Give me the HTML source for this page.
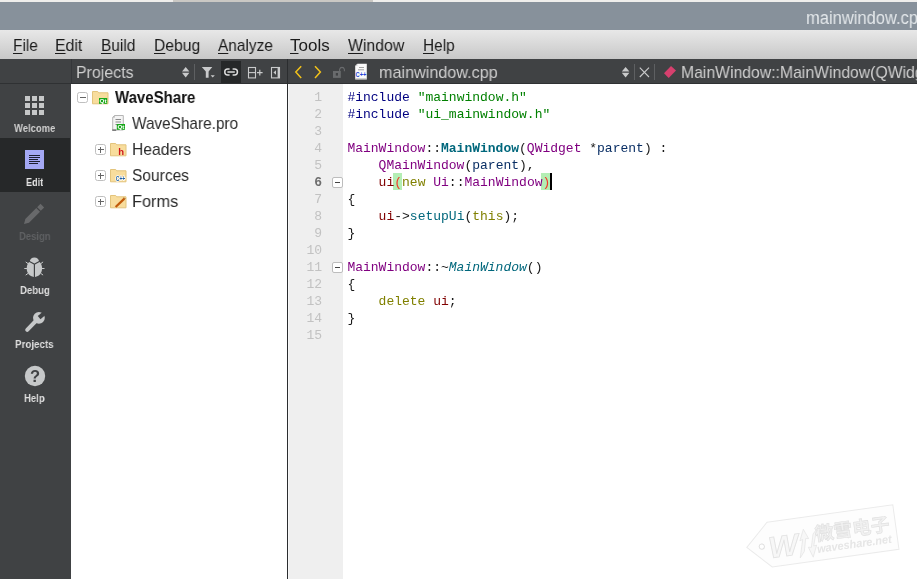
<!DOCTYPE html>
<html lang="en">
<head>
<meta charset="utf-8">
<title>mainwindow.cpp - Qt Creator</title>
<style>
*{box-sizing:border-box;margin:0;padding:0}
html,body{width:917px;height:579px;overflow:hidden;background:#fff}
body{position:relative;font-family:"Liberation Sans",sans-serif;color:#1a1a1a}
.abs{position:absolute}
.t{position:absolute;white-space:nowrap;transform-origin:0 0;line-height:1;will-change:transform}
/* top strip + title bar */
#strip{left:0;top:0;width:917px;height:2px;background:#efeeec}
#strip i{position:absolute;left:173px;top:0;width:200px;height:2px;background:#cac8c4}
#title{left:0;top:2px;width:917px;height:28px;background:#87919b}
#title .t{color:#e4e8eb;font-size:18px;transform:scaleX(.9)}
/* menu bar */
#menu{left:0;top:30px;width:917px;height:29px;background:linear-gradient(#e8e8e8,#c8c8c8)}
#menu .t{font-size:17px;top:7px;color:#1b1b1b;transform:scaleX(.9)}
#menu u{text-decoration:underline;text-underline-offset:2px;text-decoration-thickness:1px}
/* dark bars */
#bar{left:0;top:59px;width:917px;height:25px;background:#404244;border-bottom:1px solid #2f3133}
#side{left:0;top:84px;width:71px;height:495px;background:#404244}
#side .sel{position:absolute;left:0;top:54px;width:70px;height:54px;background:#262829}
.lbl{font-size:11.5px;font-weight:bold;color:#cfcfcf;transform:scaleX(.78)}
#vline{left:287px;top:59px;width:1px;height:520px;background:#2b2d2f}
#gutter{left:288px;top:84px;width:55px;height:495px;background:#efefef;border-left:1px solid #f8f8f8}
.tb{font-size:17px;color:#cfcfcf;transform:scaleX(.9)}
/* tree */
#tree .t{font-size:17px;color:#2a2a2a;transform:scaleX(.9)}
.exp{position:absolute;width:11px;height:11px;border:1px solid #bfbfbf;border-radius:2.5px;background:#fff}
.exp:before{content:"";position:absolute;left:1.5px;top:4px;width:6px;height:1px;background:#666}
.exp.plus:after{content:"";position:absolute;left:4px;top:1.5px;width:1px;height:6px;background:#666}
/* code */
#code{left:347.4px;top:89px;font-family:"Liberation Mono",monospace;font-size:13px;line-height:17px;white-space:pre;color:#1a1a1a}
#nums{left:289px;top:89px;width:33px;text-align:right;font-family:"Liberation Mono",monospace;font-size:13px;line-height:17px;color:#c2c2c2;white-space:pre}
#nums b{color:#6e6e6e}
.pp{color:#000080}.st{color:#008000}.ty{color:#800080}.fn{color:#00677c}.kw{color:#808000}.fd{color:#800000}.lo{color:#092e64}
.vf{color:#00677c;font-style:italic}
.pm{color:#f03c28}
.hl{position:absolute;top:173px;width:9px;height:17px;background:#b4eeb4}
.fold{position:absolute;left:332px;width:11px;height:11px;border:1px solid #bdbdbd;border-radius:2px;background:#fff}
.fold:before{content:"";position:absolute;left:2px;top:4px;width:5px;height:1px;background:#444}
</style>
</head>
<body>
<div id="strip" class="abs"><i></i></div>
<div id="title" class="abs"><span class="t" id="tt" style="left:806.2px;top:6.8px;transform:scaleX(.918)">mainwindow.cpp - Qt Creator</span></div>

<div id="menu" class="abs">
<span class="t" id="m1" style="left:13.1px;top:7.2px;transform:scaleX(0.904)"><u>F</u>ile</span>
<span class="t" id="m2" style="left:55.0px;top:7.2px;transform:scaleX(0.934)"><u>E</u>dit</span>
<span class="t" id="m3" style="left:101.2px;top:7.2px;transform:scaleX(0.911)"><u>B</u>uild</span>
<span class="t" id="m4" style="left:154.0px;top:7.2px;transform:scaleX(0.921)"><u>D</u>ebug</span>
<span class="t" id="m5" style="left:217.9px;top:7.2px;transform:scaleX(0.908)"><u>A</u>nalyze</span>
<span class="t" id="m6" style="left:290.4px;top:7.2px;transform:scaleX(0.998)"><u>T</u>ools</span>
<span class="t" id="m7" style="left:348.2px;top:7.2px;transform:scaleX(0.930)"><u>W</u>indow</span>
<span class="t" id="m8" style="left:423.2px;top:7.2px;transform:scaleX(0.905)"><u>H</u>elp</span>
</div>

<div id="bar" class="abs"></div>
<div class="abs" style="left:221px;top:61px;width:20px;height:22px;background:#262829"></div>
<svg class="abs" style="left:71px;top:59px" width="846" height="25" viewBox="71 59 846 25" font-family="Liberation Sans, sans-serif">
<rect x="71" y="59" width="1" height="24" fill="#35373a"/>
<!-- combo arrows -->
<path d="M182 71.6 L185.7 67 L189.4 71.6 Z M182 72.8 L185.7 77.4 L189.4 72.8 Z" fill="#c9cacb"/>
<rect x="194" y="64" width="1" height="16" fill="#5e6062"/>
<!-- filter -->
<path d="M201.8 66.9 H212.3 L208.6 71.6 V77.7 H205.8 V71.6 Z" fill="#c9cacb"/>
<path d="M210.6 75.2 H214.8 L212.7 77.6 Z" fill="#c9cacb"/>
<!-- link -->
<g fill="none" stroke="#dcdcdc" stroke-width="1.5">
<path d="M229.6 69.05 H227.7 A2.95 2.95 0 0 0 227.7 74.95 H229.6"/>
<path d="M232.6 69.05 H234.5 A2.95 2.95 0 0 1 234.5 74.95 H232.6"/>
<path d="M227.4 72 H234.8"/>
</g>
<!-- split -->
<g fill="none" stroke="#c9cacb" stroke-width="1.1">
<rect x="248.5" y="67.5" width="7" height="10.4"/><path d="M248.5 72.6 H255.5"/>
<path d="M257 72.6 H262.6 M259.8 69.8 V75.4" stroke-width="1.2"/>
</g>
<!-- collapse -->
<rect x="271.5" y="67.5" width="8" height="10.4" fill="none" stroke="#c9cacb" stroke-width="1.1"/>
<rect x="277.6" y="67.5" width="2.4" height="10.4" fill="#c9cacb"/>
<path d="M276 70.2 V74.8 L273.4 72.5 Z" fill="#c9cacb"/>
<!-- nav arrows -->
<g fill="none" stroke="#f2c21a" stroke-width="1.5" stroke-linejoin="miter">
<path d="M301.2 66.2 L295.8 72.1 L301.2 78"/>
<path d="M315 66.2 L320.4 72.1 L315 78"/>
</g>
<!-- lock -->
<rect x="333" y="71" width="7.8" height="6.9" fill="#696b6d"/>
<rect x="335.8" y="73" width="2.2" height="2.6" fill="#404244"/>
<path d="M339.6 71.5 V69.4 A2.5 2.8 0 0 1 344.4 69.4 V71.2" fill="none" stroke="#696b6d" stroke-width="1.1"/>
<!-- cpp file icon -->
<path d="M357.5 63.8 H366.8 V79 H355.2 V66 Z" fill="#fafafa"/>
<rect x="355.2" y="78.4" width="11.6" height="1.4" fill="#b4b4b4"/>
<path d="M355.2 66 L357.5 66 L357.5 63.8 Z" fill="#d5d5d5"/>
<path d="M359 67.5 H364 M358 69.8 H364" stroke="#9a9a9a" stroke-width=".9" fill="none"/>
<text x="355.6" y="77.4" font-size="8" font-weight="bold" fill="#2446d8" textLength="10.6" lengthAdjust="spacingAndGlyphs">C++</text>
<!-- right side -->
<path d="M621.8 71.6 L625.6 67 L629.4 71.6 Z M621.8 72.8 L625.6 77.4 L629.4 72.8 Z" fill="#c9cacb"/>
<rect x="634" y="64" width="1" height="16" fill="#5e6062"/>
<path d="M639.8 67.6 L649 77 M649 67.6 L639.8 77" stroke="#c9cacb" stroke-width="1.1" fill="none"/>
<rect x="654" y="64" width="1" height="16" fill="#5e6062"/>
<path d="M671 65.9 L676 70.4 L668.7 77.9 L664 73.2 Z" fill="#d6406e"/>
</svg>
<span class="t tb" id="b1" style="left:76.1px;top:63.7px;transform:scaleX(0.936)">Projects</span>
<span class="t tb" id="b2" style="left:378.6px;top:63.7px;transform:scaleX(0.952)">mainwindow.cpp</span>
<span class="t tb" id="b3" style="left:680.6px;top:63.7px;transform:scaleX(0.927)">MainWindow::MainWindow(QWidget *)</span>
<div id="side" class="abs"><div class="sel"></div></div>
<svg class="abs" style="left:0;top:59px" width="917" height="520" viewBox="0 59 917 520">
<!-- welcome grid -->
<g fill="#c6c7c8">
<rect x="25" y="96" width="5" height="5"/><rect x="32" y="96" width="5" height="5"/><rect x="39" y="96" width="5" height="5"/>
<rect x="25" y="103" width="5" height="5"/><rect x="32" y="103" width="5" height="5"/><rect x="39" y="103" width="5" height="5"/>
<rect x="25" y="110" width="5" height="5"/><rect x="32" y="110" width="5" height="5"/><rect x="39" y="110" width="5" height="5"/>
</g>
<!-- edit -->
<rect x="25" y="150" width="19" height="19" fill="#a4a8f4"/>
<g fill="#1d1e30"><rect x="29" y="155" width="11" height="1"/><rect x="29" y="157" width="11" height="1"/><rect x="29" y="159" width="9" height="1"/><rect x="29" y="161" width="11" height="1"/><rect x="29" y="163" width="9" height="1"/></g>
<!-- design pencil -->
<g transform="translate(24,224) rotate(-45)" fill="#68696b">
<path d="M0 0 L4.5 -2.6 L20 -2.6 L20 2.6 L4.5 2.6 Z"/><rect x="21.2" y="-2.6" width="4.7" height="5.2"/>
</g>
<!-- debug bug -->
<g fill="#c6c8c9" stroke="#c6c8c9">
<path d="M34.4 257.6 C37 257.6 38.6 259.4 39 261 L34.4 263.6 L29.8 261 C30.2 259.4 31.8 257.6 34.4 257.6Z" stroke="none"/>
<path d="M33.8 264.6 L29.2 262 C27.4 263.6 26.7 266 26.7 268.6 C26.7 273 29.6 276.6 33.8 277Z" stroke="none"/>
<path d="M35 264.6 L39.6 262 C41.4 263.6 42.1 266 42.1 268.6 C42.1 273 39.2 276.6 35 277Z" stroke="none"/>
<path d="M24.3 268.5H27 M41.8 268.5H44.5 M25.7 261.9L28 263.6 M43.1 261.9L40.8 263.6 M25.7 275.1L28 273.4 M43.1 275.1L40.8 273.4" fill="none" stroke-width="1"/>
</g>
<!-- projects wrench -->
<g>
<path d="M38.7 318 L27.2 329.8" stroke="#c6c8c9" stroke-width="4" stroke-linecap="round" fill="none"/>
<circle cx="38.9" cy="317.8" r="5.9" fill="#c6c8c9"/>
<rect x="0.3" y="-2.1" width="8" height="4.2" fill="#404244" transform="translate(38.9,317.8) rotate(-40)"/>
</g>
<!-- help -->
<circle cx="35" cy="376" r="10.2" fill="#c6c8c9"/>
<text x="35" y="382.4" text-anchor="middle" font-family="Liberation Sans, sans-serif" font-weight="bold" font-size="16.5" fill="#404244">?</text>
</svg>
<span class="t lbl" id="l1" style="left:13.7px;top:122.7px;transform:scaleX(0.82)">Welcome</span>
<span class="t lbl" id="l2" style="left:25.6px;top:176.7px;transform:scaleX(0.789);color:#e4e4e4">Edit</span>
<span class="t lbl" id="l3" style="left:19.1px;top:230.7px;transform:scaleX(0.823);color:#5f6163">Design</span>
<span class="t lbl" id="l4" style="left:19.5px;top:284.7px;transform:scaleX(0.834);color:#dedede">Debug</span>
<span class="t lbl" id="l5" style="left:15.2px;top:338.7px;transform:scaleX(0.851);color:#dedede">Projects</span>
<span class="t lbl" id="l6" style="left:23.8px;top:392.7px;transform:scaleX(0.828);color:#dedede">Help</span>
<div id="vline" class="abs"></div>
<div id="gutter" class="abs"></div>

<div id="tree" class="abs" style="left:0;top:0">
<svg class="abs" style="left:72px;top:85px" width="215" height="130" viewBox="72 85 215 130" font-family="Liberation Sans, sans-serif">
<path d="M92.5 91.5 h5.2 l1 1.3 h9.3 v11 h-15.5 Z" fill="#f8dd9d" stroke="#e3c47c" stroke-width="1"/>
<rect x="99" y="98" width="8.2" height="5.8" fill="#17a81a"/>
<text x="99.6" y="103.1" font-size="5.6" font-weight="bold" fill="#fff" textLength="7" lengthAdjust="spacingAndGlyphs">Qt</text>
<!-- pro file -->
<path d="M114.5 115.5 H123.3 V130 H112.7 V117.3 Z" fill="#f4f4f4" stroke="#b5b5b5" stroke-width="1"/>
<path d="M112.7 117.3 L114.5 117.3 L114.5 115.5" fill="none" stroke="#b5b5b5" stroke-width=".8"/>
<path d="M115.5 119.5H121 M115.5 122H121 M115.5 124.5H118" stroke="#8a8a8a" stroke-width="1" fill="none"/>
<rect x="112.2" y="129.5" width="4" height="1.3" fill="#666"/>
<rect x="116.8" y="124" width="8.2" height="5.8" fill="#17a81a"/>
<text x="117.4" y="129.1" font-size="5.6" font-weight="bold" fill="#fff" textLength="7" lengthAdjust="spacingAndGlyphs">Qt</text>
<path d="M110.5 143.5 h5.2 l1 1.3 h9.3 v11 h-15.5 Z" fill="#f8dd9d" stroke="#e3c47c" stroke-width="1"/>
<text x="118.3" y="155" font-size="9.5" font-weight="bold" fill="#d0161b">h</text>
<path d="M110.5 169.5 h5.2 l1 1.3 h9.3 v11 h-15.5 Z" fill="#f8dd9d" stroke="#e3c47c" stroke-width="1"/>
<text x="115.8" y="181.2" font-size="8" font-weight="bold" fill="#1f5fa0" stroke="#fff" stroke-width="1.6" paint-order="stroke" textLength="9.4" lengthAdjust="spacingAndGlyphs">C++</text>
<path d="M110.5 195.5 h5.2 l1 1.3 h9.3 v11 h-15.5 Z" fill="#f8dd9d" stroke="#e3c47c" stroke-width="1"/>
<path d="M115.6 207 L124.4 198.6" stroke="#c25a0a" stroke-width="2.2" fill="none"/>
<path d="M124.0 197.6 L125.3 198.9" stroke="#8a4a10" stroke-width="1" fill="none"/>
</svg>
<i class="exp" style="left:77px;top:92px"></i>
<span class="t" id="t1" style="left:114.5px;top:88.6px;transform:scaleX(0.883);font-weight:bold;color:#111">WaveShare</span>
<span class="t" id="t2" style="left:132.1px;top:114.6px;transform:scaleX(0.903)">WaveShare.pro</span>
<i class="exp plus" style="left:95px;top:144px"></i>
<span class="t" id="t3" style="left:132.0px;top:140.6px;transform:scaleX(0.920)">Headers</span>
<i class="exp plus" style="left:95px;top:170px"></i>
<span class="t" id="t4" style="left:132.0px;top:166.6px;transform:scaleX(0.914)">Sources</span>
<i class="exp plus" style="left:95px;top:196px"></i>
<span class="t" id="t5" style="left:132.0px;top:192.6px;transform:scaleX(0.960)">Forms</span>
</div>

<div id="nums" class="abs">1
2
3
4
5
<b>6</b>
7
8
9
10
11
12
13
14
15</div>
<i class="fold" style="top:177px"></i>
<i class="fold" style="top:262px"></i>
<i class="hl" style="left:393px"></i><i class="hl" style="left:541px"></i><i class="abs" style="left:550px;top:173px;width:2px;height:17px;background:#000"></i>
<div id="code" class="abs"><span class="pp">#include</span> <span class="st">"mainwindow.h"</span>
<span class="pp">#include</span> <span class="st">"ui_mainwindow.h"</span>

<span class="ty">MainWindow</span>::<b class="fn">MainWindow</b>(<span class="ty">QWidget</span> *<span class="lo">parent</span>) :
    <span class="ty">QMainWindow</span>(<span class="lo">parent</span>),
    <span class="fd">ui</span><span class="pm">(</span><span class="kw">new</span> <span class="ty">Ui</span>::<span class="ty">MainWindow</span><span class="pm">)</span>
{
    <span class="fd">ui</span>-&gt;<span class="fn">setupUi</span>(<span class="kw">this</span>);
}

<span class="ty">MainWindow</span>::~<span class="vf">MainWindow</span>()
{
    <span class="kw">delete</span> <span class="fd">ui</span>;
}
</div>
<svg class="abs" id="wm" style="left:737px;top:495px" width="180" height="84" viewBox="737 495 180 84">
<g transform="translate(767,522.2) rotate(-7.9)" font-family="Liberation Sans, Noto Sans CJK SC, sans-serif">
<path d="M0 0 H127 V45 H-1 L-23.5 22.3 Z" fill="#fdfdfd" stroke="#ebebeb" stroke-width="1"/>
<circle cx="-8.5" cy="23.5" r="2.6" fill="#fff" stroke="#e0e0e0" stroke-width="1"/>
<text x="-2" y="36" font-size="30" font-weight="bold" font-style="italic" fill="#f7f7f7" stroke="#e2e2e2" stroke-width=".8" textLength="30" lengthAdjust="spacingAndGlyphs">W</text>
<path d="M28 40 L33 22 L30 23 L35 12 L39 22 L36 21.5 L33 34 Z" fill="#f7f7f7" stroke="#e4e4e4" stroke-width=".7"/>
<path d="M44 14 L39 30 L42 29.5 L37 41 L33.5 30.5 L36.5 31 L40 18 Z" fill="#f7f7f7" stroke="#e4e4e4" stroke-width=".7" transform="translate(4,0)"/>
<text x="46" y="25" font-size="18.5" font-weight="bold" fill="#f1f1f1" stroke="#e0e0e0" stroke-width=".6" textLength="75" lengthAdjust="spacingAndGlyphs" font-family="Noto Sans CJK SC, sans-serif">微雪电子</text>
<text x="46" y="37.5" font-size="11.5" font-weight="bold" font-style="italic" fill="#e6e6e6" textLength="75" lengthAdjust="spacingAndGlyphs">waveshare.net</text>
</g>
</svg>
</body>
</html>
